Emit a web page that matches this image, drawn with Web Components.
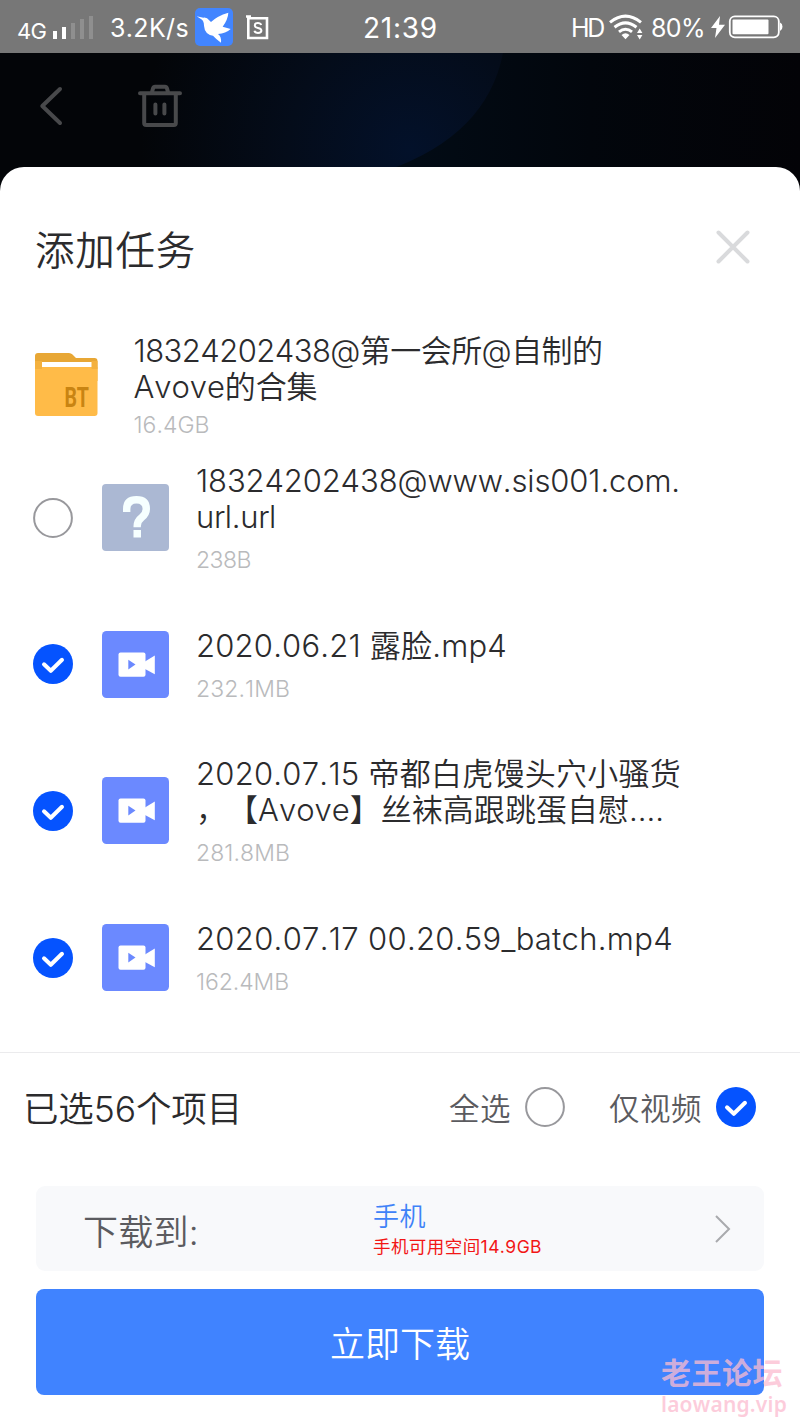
<!DOCTYPE html>
<html lang="zh-CN">

<head>
    <meta charset="UTF-8">
    <meta name="viewport" content="width=device-width, initial-scale=1.0">
    <title>添加任务</title>
    <style>
        body {
            margin: 0;
            background: #fff;
            font-family: Inter, "Noto Sans CJK SC", sans-serif;
            font-weight: 350;
            color: #2b2b2d;
        }
    </style>
</head>

<body>
    <download-page></download-page>

    <script>
        // Attach an open shadow root and fill it from a template
        function render(el, html) {
            const template = document.createElement('template');
            template.innerHTML = html;
            el.attachShadow({ mode: 'open' }).appendChild(template.content.cloneNode(true));
        }

        // One line of text, tracked out (or in) to the width given
        class FitLine extends HTMLElement {
            constructor() {
                super();
                render(this, `<style>
                        :host {
                            display: block;
                            white-space: nowrap;
                            font-kerning: none;
                            text-spacing-trim: space-all;
                        }
                        span { display: inline-block; }
                    </style><span><slot></slot></span>`);
            }

            connectedCallback() {
                const width = Number(this.getAttribute('width'));
                const span = this.shadowRoot.querySelector('span');
                const count = [...this.textContent].length;
                const natural = span.getBoundingClientRect().width;
                if (width && natural) {
                    span.style.letterSpacing = (width - natural) / count + 'px';
                }
            }
        }

        class StatusBar extends HTMLElement {
            constructor() {
                super();
                render(this, `
                    <style>
                        :host {
                            display: grid;
                            grid-template-columns: 363px 208px 1fr;
                            align-items: center;
                            height: 53px;
                            background: #777;
                            color: #fff;
                            font-weight: 400;
                        }
                        div { display: flex; align-items: center; height: 53px; }
                        svg { display: block; flex: none; }
                        .net { font-size: 22px; padding: 8px 7px 0 17px; width: 29px; }
                        .speed { font-size: 25px; width: 79px; padding: 2px 6px 0 17px; }
                        .time { font-size: 28px; padding-top: 3px; }
                        .hd { font-size: 25px; width: 32px; padding: 2px 6px 0 0; }
                        .pct { font-size: 25px; width: 53px; padding: 3px 7px 0 8px; }
                    </style>
                    <div>
                        <fit-line class="net" width="29">4G</fit-line>
                        <svg width="40" height="53" fill="#fff">
                            <path d="M0 31h4v8h-4zM9 27h4v12h-4z"/>
                            <path opacity=".18" d="M18 23h4v16h-4zM27 19h4v20h-4zM36 16h4v23h-4z"/>
                        </svg>
                        <fit-line class="speed" width="79">3.2K/s</fit-line>
                        <svg width="38" height="38" viewBox="584 19 114 114">
                            <rect x="584" y="19" width="114" height="114" rx="15" fill="#4285ff"/>
                            <path fill="#fff" d="M589 44L609 48Q619 46 628 57L632 61Q650 43 684 33Q683 53 667 75L691 82Q676 96 653 97Q664 105 662 123Q648 113 638 102Q613 98 611 72Q611 58 603 53Z"/>
                        </svg>
                        <svg width="24" height="26" viewBox="0 0 24 26" style="margin-left:12px" fill="none" stroke="#fff" stroke-width="2.6">
                            <path d="M3.3 4.3H22V24H3.3zM1 2.5h5"/>
                            <path stroke-width="2" d="M16.2 11q-.7-2-3.4-2-3 0-3 2.4 0 1.8 3.2 2.5 3.4.7 3.4 2.7 0 2.4-3.4 2.4-3 0-3.6-2.2"/>
                        </svg>
                    </div>
                    <div><fit-line class="time" width="75">21:39</fit-line></div>
                    <div>
                        <fit-line class="hd" width="32">HD</fit-line>
                        <svg width="34" height="26" viewBox="0 0 34 26" fill="none" stroke="#fff" stroke-width="3">
                            <path d="M1 8.3Q16.500-4 32 8.300M5.500 13.200Q16.500 4.500 27.500 13.200M10 17.800Q16.500 12.600 23 17.800"/>
                            <path fill="#fff" stroke="none" d="M12.500 21Q16.500 17.700 20.500 21L16.500 25.200zM28 19l2.700-4.500L33.400 19zM28 21h5.400l-2.700 4.500z"/>
                        </svg>
                        <fit-line class="pct" width="54">80%</fit-line>
                        <svg width="14" height="22" viewBox="0 0 14 22" fill="#fff"><path d="M9 0L0 12h5.500L4 22 14 8.800H8z"/></svg>
                        <svg width="55" height="24" viewBox="0 0 55 24" style="margin-left:3px">
                            <rect x="1.800" y="1.300" width="49" height="21" rx="5" fill="none" stroke="#fff" stroke-width="1.800"/>
                            <rect x="4.500" y="4.500" width="36" height="14.800" rx="1" fill="#fff"/>
                            <path fill="#fff" d="M52 7.500q2.500 1 2.500 4.300t-2.500 4.300z"/>
                        </svg>
                    </div>
                `);
            }
        }

        // Dimmed toolbar of the page behind the sheet
        class DimToolbar extends HTMLElement {
            constructor() {
                super();
                render(this, `
                    <style>
                        :host {
                            display: block;
                            height: 141px;
                            background: #020308;
                        }
                        svg { display: block; }
                    </style>
                    <svg width="800" height="141" viewBox="0 53 800 141">
                        <defs>
                            <linearGradient id="right">
                                <stop offset="0" stop-color="#020c17"/>
                                <stop offset=".5" stop-color="#02060c"/>
                                <stop offset="1" stop-color="#030307"/>
                            </linearGradient>
                            <radialGradient id="glow" gradientUnits="userSpaceOnUse" cx="410" cy="150" r="270">
                                <stop offset="0" stop-color="#03112a"/>
                                <stop offset=".45" stop-color="#040c1a"/>
                                <stop offset="1" stop-color="#030508"/>
                            </radialGradient>
                        </defs>
                        <rect x="380" y="53" width="420" height="141" fill="url(#right)"/>
                        <path d="M0 53H503Q487 135 388 170V194H0z" fill="url(#glow)"/>
                        <g fill="none" stroke="#48494b" stroke-width="4" stroke-linecap="round" stroke-linejoin="round">
                            <path d="M60 89L42.300 106 60 123"/>
                            <path d="M140 93.300h40M144.200 95v28q0 2 2 2h27.600q2 0 2-2V95M152 92l1-3.500q.6-1.800 2-1.800h10q1.400 0 2 1.800l1 3.500"/>
                            <path d="M155.400 104.500v9M164.400 104.500v9"/>
                        </g>
                    </svg>
                `);
            }
        }

        // Round check mark, filled when it has the "checked" attribute
        class RoundCheck extends HTMLElement {
            constructor() {
                super();
                render(this, `
                    <style>
                        :host { display: block; width: 40px; height: 40px; flex: none; }
                        svg { display: block; }
                        .on { display: none; }
                        :host([checked]) .on { display: inline; }
                        :host([checked]) .off { display: none; }
                    </style>
                    <svg width="40" height="40" viewBox="0 0 40 40">
                        <circle class="off" cx="20" cy="20" r="18.900" fill="none" stroke="#98989c" stroke-width="2"/>
                        <g class="on">
                            <circle cx="20" cy="20" r="20" fill="#0553ff"/>
                            <path d="M11 20.300l6.800 6.500L29 15.800" fill="none" stroke="#fff" stroke-width="4" stroke-linecap="round" stroke-linejoin="round"/>
                        </g>
                    </svg>
                `);
            }
        }

        const icons = {
            folder: `
                <svg width="63" height="65" viewBox="0 0 63 65" overflow="visible">
                    <path d="M0 4q0-3 3-3h31q2 0 3.500 1.500L41 6h18.500q3 0 3 3v20H0z" fill="#e8a735"/>
                    <path d="M7 10h50v20H7z" fill="#fff"/>
                    <path d="M0 15h62.500V61q0 3-3 3H3q-3 0-3-3z" fill="#ffbb48"/>
                    <path d="M0 9h7v8H0zM56.500 9h6v8h-6z" fill="#f4b13e"/>
                    <text transform="translate(29.500 54.500) scale(.7 1)" fill="#c98412" font-family="Roboto" font-weight="700" font-size="28">BT</text>
                </svg>`,
            unknown: `
                <svg width="67" height="67" viewBox="0 0 67 67">
                    <rect width="67" height="67" rx="4" fill="#abb8d3"/>
                    <path d="M24.700 28v-3q0-9.200 9.800-9.200t9.800 9.200q0 4.800-4.500 8.300-4.600 3.500-4.600 8.700v1.300" fill="none" stroke="#f6ffff" stroke-width="7.400"/>
                    <path d="M31.500 46h7.500V53.500h-7.500z" fill="#f6ffff"/>
                </svg>`,
            video: `
                <svg width="67" height="67" viewBox="0 0 67 67">
                    <rect width="67" height="67" rx="4.500" fill="#6b89ff"/>
                    <rect x="16.500" y="21.500" width="27" height="24.300" rx="2" fill="#fff"/>
                    <path d="M43 30.500l9.800-6v18.700L43 38z" fill="#fff"/>
                    <path d="M26.300 28.700v9.800l7.200-4.900z" fill="#6b89ff"/>
                </svg>`
        };

        class FileIcon extends HTMLElement {
            static get observedAttributes() {
                return ['type'];
            }

            constructor() {
                super();
                render(this, `
                    <style>
                        :host { display: block; flex: none; }
                        svg { display: block; }
                    </style>
                    <div></div>
                `);
            }

            attributeChangedCallback(name, oldValue, value) {
                this.shadowRoot.querySelector('div').innerHTML = icons[value] || '';
            }
        }

        class FileRow extends HTMLElement {
            constructor() {
                super();
                render(this, `
                    <style>
                        :host {
                            display: grid;
                            grid-template-columns: 40px 67px 1fr;
                            column-gap: 28px;
                            align-items: center;
                            height: 146.600px;
                            padding-left: 33px;
                        }
                        file-icon { margin-left: 1px; }
                        .name { font-size: 31px; line-height: 36px; }
                        .size { font-size: 23px; line-height: 24px; margin-top: 13px; color: #b9babc; }
                    </style>
                    <round-check></round-check>
                    <file-icon></file-icon>
                    <div>
                        <div class="name"><slot></slot></div>
                        <div class="size"><slot name="size"></slot></div>
                    </div>
                `);
            }

            connectedCallback() {
                const root = this.shadowRoot;
                root.querySelector('round-check').toggleAttribute('checked', this.hasAttribute('checked'));
                root.querySelector('file-icon').setAttribute('type', this.getAttribute('type'));
            }
        }

        class DownloadTarget extends HTMLElement {
            constructor() {
                super();
                render(this, `
                    <style>
                        :host {
                            display: grid;
                            grid-template-columns: 290px 1fr 18px;
                            align-items: center;
                            height: 85px;
                            margin: 0 36px;
                            padding: 0 32px 0 47px;
                            box-sizing: border-box;
                            border-radius: 9px;
                            background: #f8f9fb;
                        }
                        .label { font-size: 35px; color: #5b5b5f; padding-top: 2px; }
                        .place { font-size: 26px; line-height: 34px; color: #3e82f8; padding-top: 4px; }
                        .space { font-size: 17.500px; line-height: 26px; color: #f21616; font-weight: 400; }
                        svg { margin-top: 2px; }
                    </style>
                    <fit-line class="label" width="116">下载到:</fit-line>
                    <div>
                        <fit-line class="place" width="53">手机</fit-line>
                        <fit-line class="space" width="169">手机可用空间14.9GB</fit-line>
                    </div>
                    <svg width="18" height="30" fill="none" stroke="#a9aaad" stroke-width="2"><path d="M2 2l13 13L2 28"/></svg>
                `);
            }
        }

        class WaterMark extends HTMLElement {
            constructor() {
                super();
                render(this, `
                    <style>
                        :host {
                            display: block;
                            position: absolute;
                            left: 661px;
                            top: 1354px;
                            color: rgba(252, 188, 208, .75);
                            font-weight: 700;
                        }
                        .cn { font-size: 30px; line-height: 38px; }
                        .url { font-family: "Noto Sans", sans-serif; font-size: 21px; line-height: 24px; font-weight: 600; }
                    </style>
                    <fit-line class="cn" width="122">老王论坛</fit-line>
                    <fit-line class="url" width="126">laowang.vip</fit-line>
                `);
            }
        }

        class DownloadPage extends HTMLElement {
            constructor() {
                super();
                render(this, `
                    <style>
                        :host {
                            display: block;
                            position: relative;
                            width: 800px;
                            height: 1422px;
                            overflow: hidden;
                        }
                        main {
                            height: 1255px;
                            margin-top: -27px;
                            position: relative;
                            border-radius: 24px 24px 0 0;
                            background: #fff;
                        }
                        header {
                            display: flex;
                            justify-content: space-between;
                            align-items: center;
                            height: 160px;
                            padding: 0 50px 0 35px;
                        }
                        h1 { margin: 0; font-size: 39.500px; font-weight: 350; }
                        .folder { display: flex; height: 117.500px; padding-left: 35px; gap: 35.500px; }
                        .folder file-icon { padding-top: 25px; }
                        .name { font-size: 31px; line-height: 36px; padding-top: 6px; }
                        .size { font-size: 23px; line-height: 24px; margin-top: 8px; color: #b9babc; }
                        .summary {
                            display: flex;
                            align-items: center;
                            height: 108px;
                            margin-top: 21.100px;
                            margin-bottom: 25px;
                            padding: 0 44px 0 23px;
                            border-top: 1px solid #ebebed;
                        }
                        .count { font-size: 35.500px; margin-right: auto; }
                        .option { font-size: 30.500px; color: #5b5b5f; padding-right: 14px; }
                        .all { margin-right: 44px; }
                        button {
                            display: block;
                            width: 728px;
                            height: 106px;
                            margin: 18px 36px 0;
                            padding: 0;
                            border: 0;
                            border-radius: 8px;
                            background: #4083ff;
                            color: #fff;
                            font: 350 35px Inter, "Noto Sans CJK SC", sans-serif;
                        }
                    </style>
                    <status-bar></status-bar>
                    <dim-toolbar></dim-toolbar>
                    <main>
                        <header>
                            <h1><fit-line width="161">添加任务</fit-line></h1>
                            <svg width="34" height="34" fill="none" stroke="#d9dadc" stroke-width="4" stroke-linecap="round"><path d="M2.500 2.500l29 29M31.500 2.500l-29 29"/></svg>
                        </header>
                        <section class="folder">
                            <file-icon type="folder"></file-icon>
                            <div>
                                <div class="name">
                                    <fit-line width="469">18324202438@第一会所@自制的</fit-line>
                                    <fit-line width="184">Avove的合集</fit-line>
                                </div>
                                <fit-line class="size" width="76">16.4GB</fit-line>
                            </div>
                        </section>
                        <file-row type="unknown">
                            <fit-line width="484">18324202438@www.sis001.com.</fit-line>
                            <fit-line width="80">url.url</fit-line>
                            <fit-line slot="size" width="55">238B</fit-line>
                        </file-row>
                        <file-row type="video" checked>
                            <fit-line width="311">2020.06.21 露脸.mp4</fit-line>
                            <fit-line slot="size" width="94">232.1MB</fit-line>
                        </file-row>
                        <file-row type="video" checked>
                            <fit-line width="485">2020.07.15 帝都白虎馒头穴小骚货</fit-line>
                            <fit-line width="468">，【Avove】丝袜高跟跳蛋自慰....</fit-line>
                            <fit-line slot="size" width="94">281.8MB</fit-line>
                        </file-row>
                        <file-row type="video" checked>
                            <fit-line width="477">2020.07.17 00.20.59_batch.mp4</fit-line>
                            <fit-line slot="size" width="93">162.4MB</fit-line>
                        </file-row>
                        <section class="summary">
                            <fit-line class="count" width="219">已选56个项目</fit-line>
                            <fit-line class="option" width="62">全选</fit-line>
                            <round-check class="all"></round-check>
                            <fit-line class="option" width="93">仅视频</fit-line>
                            <round-check checked></round-check>
                        </section>
                        <download-target></download-target>
                        <button>立即下载</button>
                    </main>
                    <water-mark></water-mark>
                `);
            }
        }

        customElements.define('fit-line', FitLine);
        customElements.define('round-check', RoundCheck);
        customElements.define('file-icon', FileIcon);
        customElements.define('status-bar', StatusBar);
        customElements.define('dim-toolbar', DimToolbar);
        customElements.define('file-row', FileRow);
        customElements.define('download-target', DownloadTarget);
        customElements.define('water-mark', WaterMark);
        customElements.define('download-page', DownloadPage);
    </script>
</body>

</html>
